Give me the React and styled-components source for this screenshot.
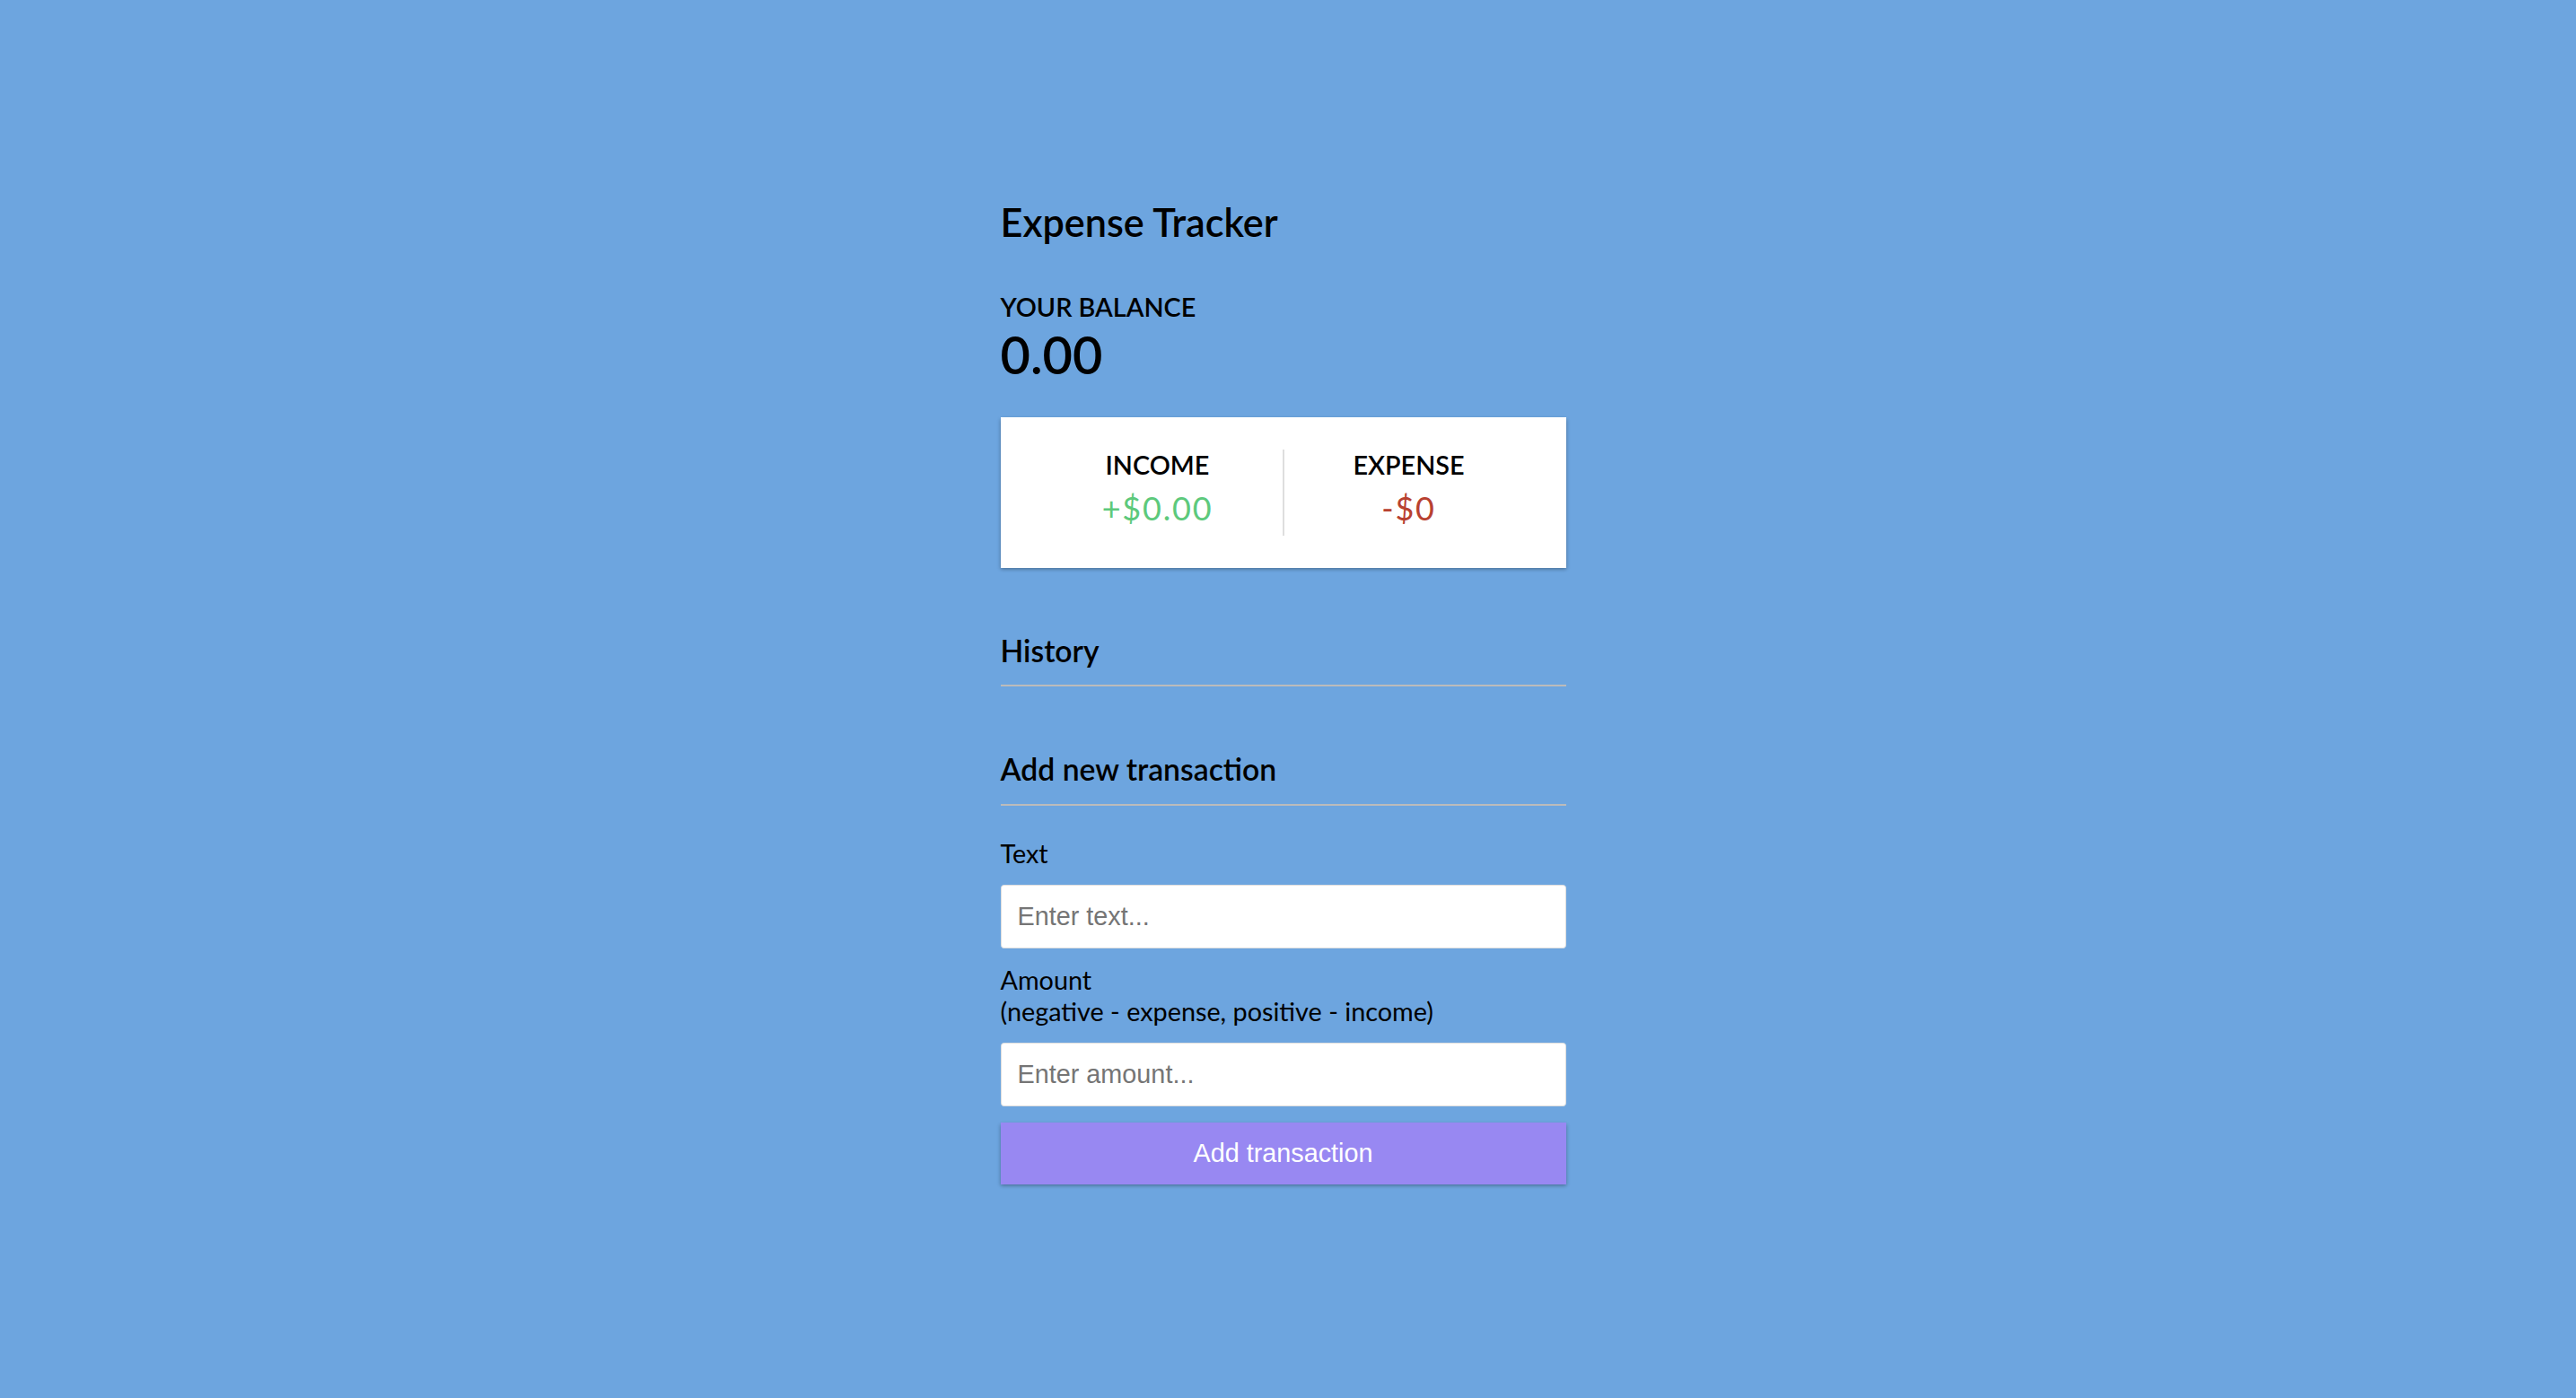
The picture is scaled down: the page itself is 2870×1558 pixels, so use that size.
import React, { useState } from "react"
import styled, { createGlobalStyle } from "styled-components"

// reference was captured at ~1.8x, so every css value is scaled by 1.8
const GlobalStyle = createGlobalStyle`
  * {
    box-sizing: border-box;
  }
  body {
    margin: 0;
    min-height: 100vh;
    display: flex;
    flex-direction: column;
    align-items: center;
    justify-content: center;
    padding-right: 11px;
    background-color: #6da5df;
    font-family: "Lato", "Open Sans", sans-serif;
    color: #000;
  }
`

const Container = styled.div`
  margin: 38px auto 54px;
  width: 630px;
`

const Title = styled.h2`
  font-size: 43.2px;
  line-height: 1.2;
  font-weight: 600;
  margin: 0 0 52px;
`

const SubHeading = styled.h4`
  margin: 0;
  font-size: 28.8px;
  line-height: 1.2;
  font-weight: 600;
  text-transform: uppercase;
`

const Balance = styled.h1`
  margin: 0;
  font-size: 57.6px;
  line-height: 1.2;
  font-weight: 600;
`

const IncExpCard = styled.div`
  background-color: #fff;
  box-shadow: 0 1.8px 5.4px rgba(0, 0, 0, 0.12), 0 1.8px 3.6px rgba(0, 0, 0, 0.24);
  padding: 36px;
  display: flex;
  justify-content: space-between;
  margin: 36px 0;
`

const IncExpCol = styled.div`
  flex: 1;
  text-align: center;
  border-right: ${(p) => (p.divider ? "2px solid #dedede" : "none")};
`

const Money = styled.p`
  font-size: 36px;
  line-height: 1.2;
  letter-spacing: 1.8px;
  margin: 9px 0;
  color: ${(p) => (p.plus ? "#5dc97c" : "#b84130")};
`

const SectionTitle = styled.h3`
  font-size: 33.7px;
  line-height: 1.2;
  font-weight: 600;
  border-bottom: 2px solid #bbb;
  padding-bottom: 18px;
  margin: 72px 0 18px;
`

const List = styled.ul`
  list-style-type: none;
  padding: 0;
  margin: 28.8px 0 72px;
`

const FormControl = styled.div``

const Label = styled.label`
  display: inline-block;
  margin: 18px 0;
  font-size: 28.8px;
  line-height: 1.2;
`

const Input = styled.input`
  display: block;
  width: 100%;
  border: 1.8px solid #dedede;
  border-radius: 3.6px;
  font-family: "Liberation Sans", Arial, sans-serif;
  font-size: 28.8px;
  padding: 18px;
  background: #fff;
  outline: none;

  &::placeholder {
    color: #757575;
  }
`

const Button = styled.button`
  cursor: pointer;
  display: block;
  width: 100%;
  margin: 18px 0 54px;
  padding: 18px;
  border: 0;
  background-color: #9888f2;
  color: #fff;
  font-family: "Liberation Sans", Arial, sans-serif;
  font-size: 28.8px;
  box-shadow: 0 1.8px 5.4px rgba(0, 0, 0, 0.12), 0 1.8px 3.6px rgba(0, 0, 0, 0.24);
`

const App = () => {
  const [text, setText] = useState("")
  const [amount, setAmount] = useState("")

  return (
    <>
      <GlobalStyle />
      <Container>
        <Title>Expense Tracker</Title>
        <SubHeading>Your Balance</SubHeading>
        <Balance>0.00</Balance>

        <IncExpCard>
          <IncExpCol divider>
            <SubHeading>Income</SubHeading>
            <Money plus>+$0.00</Money>
          </IncExpCol>
          <IncExpCol>
            <SubHeading>Expense</SubHeading>
            <Money>-$0</Money>
          </IncExpCol>
        </IncExpCard>

        <SectionTitle>History</SectionTitle>
        <List />

        <SectionTitle>Add new transaction</SectionTitle>
        <form onSubmit={(e) => e.preventDefault()}>
          <FormControl>
            <Label htmlFor="text">Text</Label>
            <Input
              type="text"
              id="text"
              value={text}
              onChange={(e) => setText(e.target.value)}
              placeholder="Enter text..."
            />
          </FormControl>
          <FormControl>
            <Label htmlFor="amount">
              Amount <br />
              (negative - expense, positive - income)
            </Label>
            <Input
              type="number"
              id="amount"
              value={amount}
              onChange={(e) => setAmount(e.target.value)}
              placeholder="Enter amount..."
            />
          </FormControl>
          <Button>Add transaction</Button>
        </form>
      </Container>
    </>
  )
}

export default App
